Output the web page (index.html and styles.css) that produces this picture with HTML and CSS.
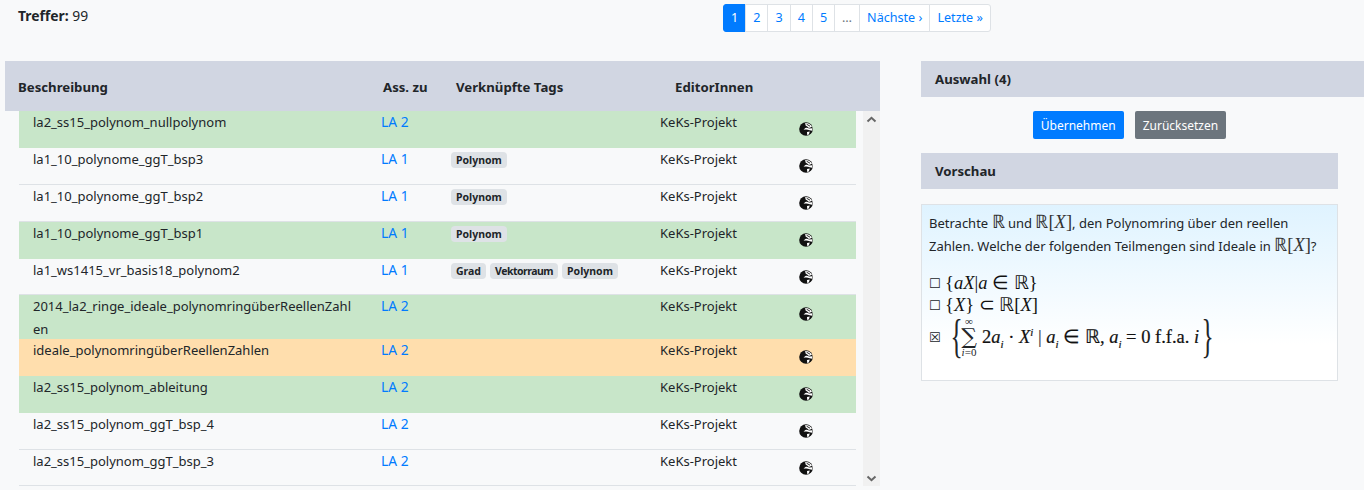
FILE: index.html
```html
<!DOCTYPE html>
<html lang="de">
<head>
    <meta charset="UTF-8">
    <title>Aufgaben Suche</title>
    <link rel="stylesheet" href="styles.css">
</head>
<body>
    <svg class="sprite" width="0" height="0">
        <symbol id="globe" viewBox="0 0 14 14">
            <circle cx="7" cy="7" r="6.8" fill="#111"/>
            <path d="M6.2 1 C9 0.8 11.8 2 13 4.8 L10 6 L8.2 4.6 L6.6 3.6 Z" fill="#fff"/>
            <path d="M7.6 2.2 L11 4.2" fill="none" stroke="#111" stroke-width="0.9"/>
            <path d="M4.6 7.8 C6 5.2 8.4 5.2 10 6.4 L13.4 6.2 L13.2 8.8 L10.6 8.2 C8.6 7.2 6.6 7.4 4.6 7.8 Z" fill="#fff"/>
            <path d="M8 10 L10.8 9.6 L9.8 12.4 L8.2 12.9 Z" fill="#fff"/>
        </symbol>
    </svg>

    <div class="topbar">
        <div class="hits"><b>Treffer:</b> 99</div>
        <ul class="pagination">
            <li class="active"><a>1</a></li>
            <li><a>2</a></li>
            <li><a>3</a></li>
            <li><a>4</a></li>
            <li><a>5</a></li>
            <li class="dots"><a>…</a></li>
            <li><a>Nächste ›</a></li>
            <li><a>Letzte »</a></li>
        </ul>
    </div>

    <div class="main">
        <div class="results">
            <div class="thead">
                <div>Beschreibung</div>
                <div>Ass. zu</div>
                <div>Verknüpfte Tags</div>
                <div>EditorInnen</div>
            </div>
            <div class="scrollarea">
                <div class="rows">
                    <div class="row green">
                        <div class="desc">la2_ss15_polynom_nullpolynom</div>
                        <a class="ass">LA 2</a>
                        <div class="tags"></div>
                        <div class="editor">KeKs-Projekt</div>
                        <svg class="globe"><use href="#globe"/></svg>
                    </div>
                    <div class="row">
                        <div class="desc">la1_10_polynome_ggT_bsp3</div>
                        <a class="ass">LA 1</a>
                        <div class="tags"><span class="tag">Polynom</span></div>
                        <div class="editor">KeKs-Projekt</div>
                        <svg class="globe"><use href="#globe"/></svg>
                    </div>
                    <div class="row">
                        <div class="desc">la1_10_polynome_ggT_bsp2</div>
                        <a class="ass">LA 1</a>
                        <div class="tags"><span class="tag">Polynom</span></div>
                        <div class="editor">KeKs-Projekt</div>
                        <svg class="globe"><use href="#globe"/></svg>
                    </div>
                    <div class="row green">
                        <div class="desc">la1_10_polynome_ggT_bsp1</div>
                        <a class="ass">LA 1</a>
                        <div class="tags"><span class="tag">Polynom</span></div>
                        <div class="editor">KeKs-Projekt</div>
                        <svg class="globe"><use href="#globe"/></svg>
                    </div>
                    <div class="row">
                        <div class="desc">la1_ws1415_vr_basis18_polynom2</div>
                        <a class="ass">LA 1</a>
                        <div class="tags"><span class="tag">Grad</span><span class="tag narrow">Vektorraum</span><span class="tag">Polynom</span></div>
                        <div class="editor">KeKs-Projekt</div>
                        <svg class="globe"><use href="#globe"/></svg>
                    </div>
                    <div class="row green tall">
                        <div class="desc">2014_la2_ringe_ideale_polynomringüberReellenZahlen</div>
                        <a class="ass">LA 2</a>
                        <div class="tags"></div>
                        <div class="editor">KeKs-Projekt</div>
                        <svg class="globe"><use href="#globe"/></svg>
                    </div>
                    <div class="row orange">
                        <div class="desc">ideale_polynomringüberReellenZahlen</div>
                        <a class="ass">LA 2</a>
                        <div class="tags"></div>
                        <div class="editor">KeKs-Projekt</div>
                        <svg class="globe"><use href="#globe"/></svg>
                    </div>
                    <div class="row green">
                        <div class="desc">la2_ss15_polynom_ableitung</div>
                        <a class="ass">LA 2</a>
                        <div class="tags"></div>
                        <div class="editor">KeKs-Projekt</div>
                        <svg class="globe"><use href="#globe"/></svg>
                    </div>
                    <div class="row">
                        <div class="desc">la2_ss15_polynom_ggT_bsp_4</div>
                        <a class="ass">LA 2</a>
                        <div class="tags"></div>
                        <div class="editor">KeKs-Projekt</div>
                        <svg class="globe"><use href="#globe"/></svg>
                    </div>
                    <div class="row">
                        <div class="desc">la2_ss15_polynom_ggT_bsp_3</div>
                        <a class="ass">LA 2</a>
                        <div class="tags"></div>
                        <div class="editor">KeKs-Projekt</div>
                        <svg class="globe"><use href="#globe"/></svg>
                    </div>
                </div>
                <div class="scrollbar">
                    <svg width="11" height="7" viewBox="0 0 11 7"><path d="M1.5 5.5 L5.5 1.8 L9.5 5.5" fill="none" stroke="#666" stroke-width="2"/></svg>
                    <svg width="11" height="7" viewBox="0 0 11 7"><path d="M1.5 1.5 L5.5 5.2 L9.5 1.5" fill="none" stroke="#666" stroke-width="2"/></svg>
                </div>
            </div>
        </div>

        <div class="side">
            <div class="panel-head wide">Auswahl (4)</div>
            <div class="buttons">
                <button class="btn primary">Übernehmen</button>
                <button class="btn secondary">Zurücksetzen</button>
            </div>
            <div class="panel-head">Vorschau</div>
            <div class="preview">
                <p class="question">Betrachte <span class="m">ℝ</span> und <span class="m">ℝ[<i>X</i>]</span>, den Polynomring über den reellen<br>Zahlen. Welche der folgenden Teilmengen sind Ideale in <span class="m">ℝ[<i>X</i>]</span>?</p>
                <div class="option"><span class="box">☐</span><span class="m dark">{<i>aX</i>|<i>a</i> ∈ ℝ}</span></div>
                <div class="option"><span class="box">☐</span><span class="m dark">{<i>X</i>} ⊂ ℝ[<i>X</i>]</span></div>
                <div class="option big">
                    <span class="box">☒</span>
                    <span class="brace">{</span>
                    <span class="sum"><small>∞</small><span class="sigma">∑</span><small><i>i</i>=0</small></span>
                    <span class="m dark bold">2<i>a<sub>i</sub></i> · <i>X<sup>i</sup></i> <span class="bar">|</span> <i>a<sub>i</sub></i> ∈ ℝ, <i>a<sub>i</sub></i> = 0 f.f.a. <i>i</i></span>
                    <span class="brace">}</span>
                </div>
            </div>
        </div>
    </div>
</body>
</html>
```

FILE: styles.css
```css
* {
    box-sizing: border-box;
}
body {
    margin: 0;
    height: 490px;
    overflow: hidden;
    background-color: #f8f9fa;
    color: #212529;
    font-family: "Noto Sans", Arial, sans-serif;
    font-size: 13px;
}
a {
    color: #007bff;
    text-decoration: none;
}
.sprite {
    display: block;
}
.topbar {
    display: flex;
    height: 61px;
    padding: 4px 0 0 18px;
}
.hits {
    width: 705px;
    padding-top: 2px;
    font-size: 13.9px;
}
.pagination {
    display: flex;
    height: 28px;
    margin: 0;
    padding: 0;
    list-style: none;
    font-size: 12.6px;
}
.pagination li {
    border: 1px solid #dee2e6;
    margin-left: -1px;
    background: #fff;
    line-height: 26px;
    text-align: center;
    padding: 0 7px;
}
.pagination li:first-child {
    margin-left: 0;
    border-radius: 3px 0 0 3px;
}
.pagination li:last-child {
    border-radius: 0 3px 3px 0;
}
.pagination a {
    color: #007bff;
}
.pagination .active {
    background: #007bff;
    border-color: #007bff;
}
.pagination .active a {
    color: #fff;
}
.pagination .dots a {
    color: #6c757d;
}
.main {
    display: flex;
    padding-left: 5px;
}
.results {
    width: 875px;
    flex: none;
}
.thead {
    display: grid;
    grid-template-columns: 365px 73px 219px 1fr;
    align-items: center;
    height: 50.4px;
    padding: 1px 0 0 13px;
    background-color: #d1d6e2;
    font-size: 13.2px;
    font-weight: 700;
}
.scrollarea {
    display: flex;
    height: 375px;
    padding-left: 14px;
}
.rows {
    width: 837px;
    flex: none;
}
.row {
    display: grid;
    grid-template-columns: 348px 70px 209px 139px 1fr;
    height: 36.8px;
    padding: 1px 0 0 14px;
    border-bottom: 1px solid #dee2e6;
    line-height: 20px;
}
.row.tall {
    height: 43.8px;
    padding-top: 0;
    line-height: 22.4px;
}
.row.tall .globe {
    margin-top: 12px;
}
.row.green {
    background-color: #c8e6c9;
    border-bottom-color: #c8e6c9;
}
.row.orange {
    background-color: #ffdead;
    border-bottom-color: #ffdead;
}
.desc {
    padding-right: 30px;
    word-break: break-all;
}
.ass {
    font-size: 13.8px;
}
.tags {
    display: flex;
    gap: 4px;
    align-items: flex-start;
    padding-top: 3px;
}
.tag {
    padding: 0 5px;
    height: 16px;
    line-height: 16px;
    border-radius: 4px;
    background-color: #dee2e6;
    font-size: 10.5px;
    font-weight: 700;
}
.tag.narrow {
    letter-spacing: -0.5px;
}
.globe {
    width: 14px;
    height: 14px;
    margin-top: 10px;
}
.scrollbar {
    width: 17px;
    height: 100%;
    margin-left: 7px;
    padding: 5px 0 4px;
    background-color: #f1f1f1;
    display: flex;
    flex-direction: column;
    justify-content: space-between;
    align-items: center;
}
.side {
    width: 443px;
    margin-left: 41px;
    flex: none;
}
.panel-head {
    width: 417px;
    height: 36px;
    padding-left: 14px;
    line-height: 36px;
    background-color: #d1d6e2;
    font-size: 13.2px;
    font-weight: 700;
}
.panel-head.wide {
    width: 443px;
}
.buttons {
    display: flex;
    justify-content: center;
    gap: 11px;
    width: 417px;
    padding: 14px 0;
}
.btn {
    height: 28px;
    padding: 0 8px;
    border: none;
    border-radius: 2px;
    color: #fff;
    font-family: inherit;
    font-size: 12px;
}
.primary {
    background-color: #007bff;
}
.secondary {
    background-color: #6c757d;
}
.preview {
    width: 417px;
    height: 177px;
    margin-top: 15px;
    padding: 7px;
    border: 1px solid #dee2e6;
    background: linear-gradient(#dff3ff, #ffffff 80%);
    font-size: 13px;
}
.question {
    margin: 0 0 14px;
    line-height: 23px;
}
.m {
    font-family: "Liberation Serif", serif;
    font-size: 18.5px;
    line-height: 1;
    color: #333;
}
.dark {
    color: #111;
}
.bold {
    -webkit-text-stroke: 0.2px #111;
}
.option {
    display: flex;
    align-items: center;
    height: 22px;
}
.box {
    width: 16px;
    flex: none;
    font-family: "DejaVu Sans", sans-serif;
    font-size: 13px;
}
.option.big {
    height: 44px;
    margin-top: -1px;
}
.option.big .box {
    width: 19px;
}
.brace {
    font-family: "Liberation Serif", serif;
    font-size: 46px;
    font-weight: 400;
    line-height: 40px;
    transform: scaleX(0.55);
    width: 11px;
    text-align: center;
}
.sum {
    display: flex;
    flex-direction: column;
    align-items: center;
    width: 20px;
    margin-right: 3px;
    font-family: "Liberation Serif", serif;
    line-height: 11px;
}
.sum small {
    font-size: 11px;
}
.sigma {
    font-family: "DejaVu Serif", serif;
    font-size: 22px;
    line-height: 20px;
}
.bar {
    color: #555;
}
sub, sup {
    font-size: 11px;
    line-height: 0;
}
```
